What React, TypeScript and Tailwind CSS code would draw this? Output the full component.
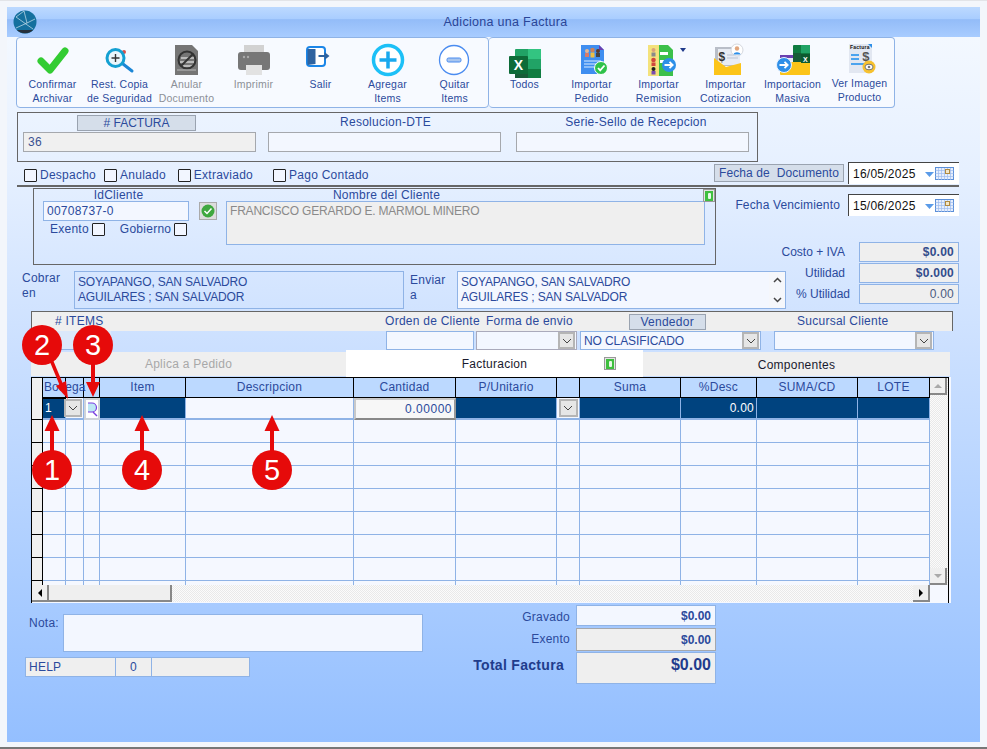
import React from 'react';

const BLUE = 'border-[#8fb3e6]';

const Check = () => (
  <svg width="36" height="32" className="overflow-visible">
    <polyline points="6,18 15,27 30,8" fill="none" stroke="#33cc33" strokeWidth="7" strokeLinecap="round" strokeLinejoin="round" />
  </svg>
);

const Restore = () => (
  <svg width="36" height="32" className="overflow-visible">
    <line x1="21" y1="21" x2="30" y2="28" stroke="#1b86d6" strokeWidth="3" strokeLinecap="round" />
    <circle cx="22" cy="9" r="2" fill="#d8504a" />
    <circle cx="13.5" cy="15" r="8.5" fill="#eaf6fb" stroke="#14a0d2" strokeWidth="3" />
    <path d="M9.500 15h8M13.500 11v8" stroke="#333" strokeWidth="1.400" />
  </svg>
);

const Anular = () => (
  <svg width="36" height="32" className="overflow-visible">
    <path d="M6 2h17l6 6v24H6z" fill="#757575" />
    <path d="M12 15h13M11 19h14M13 23h10" stroke="#cfcfcf" strokeWidth="1.400" />
    <circle cx="18" cy="17" r="8.500" fill="none" stroke="#333" strokeWidth="2" />
    <line x1="12" y1="23" x2="24" y2="11" stroke="#333" strokeWidth="2" />
    <path d="M8 27h19" stroke="#bbb" strokeWidth="1" />
  </svg>
);

const Printer = () => (
  <svg width="36" height="32" className="overflow-visible">
    <rect x="8" y="2" width="20" height="10" fill="#d2d2d2" />
    <rect x="2" y="9" width="32" height="18" rx="3" fill="#777" />
    <circle cx="8" cy="14" r="1.200" fill="#aaa" />
    <circle cx="12" cy="14" r="1.200" fill="#aaa" />
    <rect x="10" y="22" width="16" height="10" fill="#e2e2e2" />
  </svg>
);

const Salir = () => (
  <svg width="36" height="32" className="overflow-visible">
    <rect x="4" y="4" width="18" height="19" rx="3" fill="#fff" stroke="#1b86e8" strokeWidth="2" />
    <path d="M4.500 6h8v15l-8 1z" fill="#2f639f" />
    <path d="M15.500 13h7" stroke="#2f639f" strokeWidth="2" />
    <path d="M21.500 9l5 4-5 4z" fill="#2f639f" />
  </svg>
);

const Plus = () => (
  <svg width="36" height="32" className="overflow-visible">
    <circle cx="18" cy="17" r="14.500" fill="#fff" stroke="#1cc0f7" strokeWidth="3.500" />
    <path d="M9.500 17h17M18 8.500v17" stroke="#1aa9ee" strokeWidth="3.500" />
  </svg>
);

const Minus = () => (
  <svg width="36" height="32" className="overflow-visible">
    <circle cx="17" cy="17" r="14.500" fill="#fff" stroke="#4b8cf0" strokeWidth="1.300" />
    <rect x="10" y="15" width="14" height="4" rx="1.500" fill="#a9c6ee" stroke="#4b8cf0" />
  </svg>
);

const Excel = () => (
  <svg width="36" height="32" className="overflow-visible">
    <rect x="8" y="6" width="26" height="29" rx="1" fill="#21a366" />
    <rect x="21" y="6" width="13" height="10" fill="#33c481" />
    <rect x="8" y="16" width="13" height="10" fill="#107c41" />
    <rect x="21" y="26" width="13" height="9" fill="#107c41" />
    <rect x="8" y="26" width="13" height="9" fill="#185c37" />
    <rect x="2" y="13" width="19" height="18" rx="1" fill="#0d6b38" />
    <text x="11.500" y="27" textAnchor="middle" fontSize="14" fontWeight="700" fill="#fff" fontFamily="Liberation Sans">X</text>
  </svg>
);

const Pedido = () => (
  <svg width="36" height="32" className="overflow-visible">
    <path d="M7 2h18l5 5v24H7z" fill="#3f8ef0" />
    <path d="M25 2l5 5h-5z" fill="#6a3fb0" />
    <circle cx="13" cy="8" r="2" fill="#e9b58f" />
    <circle cx="18.500" cy="7" r="2.300" fill="#c9825a" />
    <circle cx="24" cy="8" r="2" fill="#5a3a2a" />
    <rect x="11" y="10" width="4" height="4" fill="#d87a6a" />
    <rect x="16.500" y="9.500" width="4" height="5" fill="#f0c040" />
    <rect x="22" y="10" width="4" height="4" fill="#444" />
    <path d="M10 18h17M10 21h17M10 24h10" stroke="#d9ebff" strokeWidth="1.200" />
    <circle cx="27" cy="25" r="6.500" fill="#2fc24a" stroke="#fff" />
    <path d="M24 25l2.200 2.400L30.500 22.500" fill="none" stroke="#fff" strokeWidth="1.800" />
  </svg>
);

const Remision = () => (
  <svg width="36" height="32" className="overflow-visible">
    <rect x="7" y="2" width="11" height="31" fill="#f4e27c" />
    <path d="M18 2h9l5 5v26H18z" fill="#3cc04a" />
    <rect x="19" y="9" width="8" height="3" fill="#fff" />
    <rect x="19" y="17" width="8" height="3" fill="#fff" />
    <circle cx="12.500" cy="7" r="2" fill="#d9a27a" />
    <rect x="10.500" y="9.500" width="4" height="4" fill="#8a8a8a" />
    <circle cx="12.500" cy="17" r="2.300" fill="#d0473c" />
    <rect x="10.500" y="19.500" width="4" height="3.500" fill="#d0473c" />
    <circle cx="12.500" cy="26" r="2" fill="#222" />
    <rect x="10.500" y="28" width="4" height="3.500" fill="#7a4bb0" />
    <circle cx="28" cy="22" r="7" fill="#2e8fe8" />
    <path d="M23.500 22h8M28.500 18.800l3.200 3.200-3.200 3.200" fill="none" stroke="#fff" strokeWidth="1.800" />
  </svg>
);

const Cotizacion = () => (
  <svg width="36" height="32" className="overflow-visible">
    <rect x="7" y="4" width="25" height="19" fill="#b9bec8" />
    <rect x="10" y="6" width="22" height="16" fill="#e8ecf4" />
    <text x="14" y="18" textAnchor="middle" fontSize="12" fontWeight="700" fill="#333" fontFamily="Liberation Sans">$</text>
    <path d="M19 12h11M19 15h11" stroke="#bbc4d4" />
    <path d="M6 15l12 9 15-4v12H6z" fill="#fcc419" />
    <circle cx="29" cy="7" r="6" fill="#fff" stroke="#d5d8de" />
    <circle cx="29" cy="5.500" r="2.200" fill="#e2a77e" />
    <path d="M25.500 11.500c.5-3 6.500-3 7 0z" fill="#2e8fe8" />
  </svg>
);

const Masiva = () => (
  <svg width="36" height="32" className="overflow-visible">
    <path d="M5 12h20v4H5z" fill="#6a3fb0" />
    <path d="M5 15h22v4H5z" fill="#e8ecf4" />
    <path d="M5 19h30v12a1 1 0 0 1-1 1H6a1 1 0 0 1-1-1z" fill="#fcc419" />
    <rect x="18" y="2" width="17" height="17" rx="1" fill="#107c41" />
    <rect x="26" y="2" width="9" height="8" fill="#21a366" />
    <rect x="18" y="10" width="8" height="9" fill="#185c37" />
    <rect x="26" y="11" width="9" height="9" fill="#0d5a30" />
    <text x="30.500" y="19" textAnchor="middle" fontSize="7" fontWeight="700" fill="#fff" fontFamily="Liberation Sans">X</text>
    <circle cx="9" cy="22" r="7.500" fill="#2e8fe8" stroke="#eaf2ff" />
    <path d="M4.500 22h8M9.500 18.800l3.200 3.200-3.200 3.200" fill="none" stroke="#fff" strokeWidth="1.800" />
  </svg>
);

const VerImagen = () => (
  <svg width="36" height="32" className="overflow-visible">
    <rect x="7" y="1" width="23" height="29" fill="#e2e7f1" />
    <path d="M26 1h4v4z" fill="#2e8fe8" />
    <text x="8" y="6" fontSize="5" fontWeight="700" fill="#111" fontFamily="Liberation Sans">Factura</text>
    <text x="24" y="18" textAnchor="middle" fontSize="13" fontWeight="700" fill="#555" fontFamily="Liberation Sans">$</text>
    <path d="M9 12h8M9 16h8M9 21h17" stroke="#4ba3ee" strokeWidth="1.800" />
    <circle cx="27" cy="24" r="6.500" fill="#f6c12f" />
    <ellipse cx="27" cy="24" rx="4" ry="2.800" fill="#fff" stroke="#777" />
    <circle cx="27" cy="24" r="1.300" fill="#777" />
  </svg>
);

const TOOLS_A = [
  { icon: <Check />, lines: ['Confirmar', 'Archivar'] },
  { icon: <Restore />, lines: ['Rest. Copia', 'de Seguridad'] },
  { icon: <Anular />, lines: ['Anular', 'Documento'], off: true },
  { icon: <Printer />, lines: ['Imprimir'], off: true },
  { icon: <Salir />, lines: ['Salir'] },
  { icon: <Plus />, lines: ['Agregar', 'Items'] },
  { icon: <Minus />, lines: ['Quitar', 'Items'] },
];

const TOOLS_B = [
  { icon: <Excel />, lines: ['Todos'] },
  { icon: <Pedido />, lines: ['Importar', 'Pedido'] },
  { icon: <Remision />, lines: ['Importar', 'Remision'] },
  { icon: <Cotizacion />, lines: ['Importar', 'Cotizacion'] },
  { icon: <Masiva />, lines: ['Importacion', 'Masiva'] },
  { icon: <VerImagen />, lines: ['Ver Imagen', 'Producto'], up: true },
];

type Tool = { icon: React.ReactNode; lines: string[]; off?: boolean; up?: boolean };

const ToolItem = ({ tool }: { tool: Tool }) => (
  <div className="w-[67px] flex flex-col items-center pt-[5px]">
    <div className="h-[32px]">{tool.icon}</div>
    <div className={`${tool.up ? 'mt-[1px]' : 'mt-[2px]'} text-[10.500px] tracking-[0.2px] leading-[14px] text-center whitespace-nowrap ${tool.off ? 'text-[#8c9097]' : 'text-[#2b4a9c]'}`}>
      {tool.lines.map((l) => (
        <div key={l}>{l}</div>
      ))}
    </div>
  </div>
);

const Box = ({ className }: { className?: string }) => (
  <div className={`w-[13px] h-[13px] border border-[#222] bg-[#f2f6ff] rounded-[1px] shrink-0 ${className ?? ''}`} />
);

const Chevron = ({ className }: { className?: string }) => (
  <div className={`bg-[#e6e6e6] border-2 border-[#b5b5b5] flex items-center justify-center shrink-0 ${className ?? ''}`}>
    <svg width="10" height="6" viewBox="0 0 10 6">
      <path d="M1 1l4 4 4-4" fill="none" stroke="#444" strokeWidth="1" />
    </svg>
  </div>
);

const DateBox = ({ value }: { value: string }) => (
  <div className="w-[111px] h-[22px] bg-white border-t border-l border-[#444] flex items-center pl-[4px] shrink-0">
    <span className="text-[12px] text-[#111] mt-[1px]">{value}</span>
    <svg width="30" height="14" className="ml-auto mr-[5px]">
      <path d="M1 5h9l-4.500 5z" fill="#5b9be8" />
      <rect x="11.500" y="0.500" width="18" height="12" fill="#e6eefc" stroke="#5b8fd8" />
      <path d="M11.500 3.500h18M11.500 6.500h18M11.500 9.500h18M14.500 1v12M17.500 1v12M20.500 1v12M23.500 1v12M26.500 1v12" stroke="#9dbbee" strokeWidth="0.700" />
      <rect x="21.500" y="2.500" width="4" height="4" fill="#f3e6c8" stroke="#b08a3e" />
    </svg>
  </div>
);

const GreenTab = ({ className }: { className?: string }) => (
  <div className={`w-[12px] h-[13px] bg-[#e4e4e4] border border-[#999] flex items-center justify-center ${className ?? ''}`}>
    <div className="w-[8px] h-[10px] bg-[#3fbf3f] flex items-center justify-center">
      <div className="w-[3px] h-[6px] bg-[#e8f8e8] rounded-[1px]" />
    </div>
  </div>
);

const CostRow = ({ label, value, bold, mr }: { label: string; value: string; bold?: boolean; mr: string }) => (
  <div className="flex justify-end items-center h-[20px] mb-[1px]">
    <span className={`whitespace-nowrap ${mr} -mt-[1px] tracking-normal`}>{label}</span>
    <div className={`w-[100px] h-[20px] border ${BLUE} bg-[#efefef] text-right pr-[4px] leading-[19px] shrink-0 ${bold ? 'font-bold text-[#334d8c]' : 'text-[#4a5a80]'}`}>
      {value}
    </div>
  </div>
);

const COLS = 'grid grid-cols-[11px_23px_18px_16px_86px_168px_102px_101px_23px_101px_76px_101px_72px]';
const RH = 'bg-[#f0f0f0] border-r border-b border-black';
const HEADS = ['Item', 'Descripcion', 'Cantidad', 'P/Unitario', '', 'Suma', '%Desc', 'SUMA/CD', 'LOTE'];
const NAVY = 'bg-[#00437f] border-r border-b-2 border-[#8fb3e6]';

const EmptyRow = ({ h }: { h: string }) => (
  <div className={COLS}>
    <div className={`${RH} ${h}`} />
    {Array.from({ length: 12 }).map((_, i) => (
      <div key={i} className={`border-r border-b ${BLUE} ${h}`} />
    ))}
  </div>
);

const ScrollBtn = ({ className, children }: { className?: string; children: React.ReactNode }) => (
  <div className={`bg-[#efefef] border-r-2 border-b-2 border-[#888] flex items-center justify-center shrink-0 ${className ?? ''}`}>{children}</div>
);

const Track = '[background:repeating-conic-gradient(#e9e9e9_0_25%,#fbfbfb_0_50%)_0_0/2px_2px]';

const Callout = ({ n, x, y }: { n: number; x: string; y: string }) => (
  <div className={`absolute ${x} ${y} w-[40px] h-[40px] rounded-full bg-[#e60a0a] text-white text-[29px] tracking-normal leading-[40px] text-center`}>{n}</div>
);

export default function App() {
  return (
    <div className="relative w-[987px] h-[749px] bg-[#f3f6fb] border-t border-b-2 border-t-[#e2e4e8] border-b-[#777] pt-[6px] px-[7px] overflow-hidden [font-family:'Liberation_Sans',Arial,sans-serif] text-[12px] tracking-[0.25px] text-[#2b4a9c]">
      <div className="w-[973px] h-[735px] flex flex-col bg-[linear-gradient(180deg,#f6faff_0%,#e6f0ff_22%,#cfe2ff_43%,#a6caff_82%,#94bfff_100%)]">
        {/* Title bar */}
        <div className="relative h-[30px] shrink-0 flex items-center justify-center pl-[24px] bg-[linear-gradient(180deg,#bcd9ff_0%,#a9cdff_40%,#93bcf8_42%,#a8ccff_100%)]">
          <svg width="24" height="24" viewBox="0 0 24 24" className="absolute left-[6px] top-[3px]">
            <circle cx="12" cy="12" r="11.500" fill="#15709e" />
            <path d="M4 20a11.500 11.500 0 0 0 16 0z" fill="#26303c" />
            <path d="M3 7l17 12M3 7l8-6M11 1l3 12M14 13L3 18M14 13l8-4" fill="none" stroke="#cfe4ee" strokeWidth="0.700" />
          </svg>
          <span className="text-[12.500px] tracking-[0.3px] text-[#2a4597]">Adiciona una Factura</span>
        </div>

        {/* Toolbar */}
        <div className="flex ml-[9px] h-[71px] shrink-0">
          <div className={`relative flex w-[473px] pl-[2px] bg-[#f7faff] border ${BLUE} rounded-[4px]`}>
            {TOOLS_A.map((t) => (
              <ToolItem key={t.lines[0]} tool={t} />
            ))}
          </div>
          <div className={`relative flex w-[406px] pl-[2px] bg-[#f7faff] border border-l-0 ${BLUE} rounded-[4px]`}>
            {TOOLS_B.map((t) => (
              <ToolItem key={t.lines.join()} tool={t} />
            ))}
            <div className="absolute left-[191px] top-[10px] w-0 h-0 border-x-[3px] border-x-transparent border-t-[4px] border-t-[#1f3a8a]" />
          </div>
        </div>

        {/* Numero de factura */}
        <div className="ml-[10px] mt-[4px] w-[741px] h-[50px] border border-[#666] shrink-0 pl-[5px] pt-[2px]">
          <div className="flex h-[16px] leading-[15px]">
            <div className="ml-[54px] w-[119px] bg-[#d5deea] border border-[#9aa3b0] text-center tracking-normal">
              # FACTURA
            </div>
            <div className="ml-[72px] w-[233px] text-center leading-[14px] pl-[2px]">Resolucion-DTE</div>
            <div className="ml-[15px] w-[233px] text-center leading-[14px] pl-[7px]">Serie-Sello de Recepcion</div>
          </div>
          <div className="flex mt-[1px] h-[20px]">
            <div className="w-[233px] bg-[#f0f0f0] border border-[#a5a8ad] pl-[4px] leading-[19px] text-[#3a5290]">36</div>
            <div className="ml-[12px] w-[233px] bg-[#f3f7ff] border border-[#a5a8ad]" />
            <div className="ml-[15px] w-[233px] bg-[#f3f7ff] border border-[#a5a8ad]" />
          </div>
        </div>

        {/* Opciones y fecha */}
        <div className="flex ml-[17px] w-[935px] h-[23px] shrink-0">
          <div className="flex items-center h-[14px] mt-[6px]">
            <Box />
            <span className="ml-[3px]">Despacho</span>
            <Box className="ml-[8px]" />
            <span className="ml-[3px]">Anulado</span>
            <Box className="ml-[12px]" />
            <span className="ml-[3px]">Extraviado</span>
            <Box className="ml-[20px]" />
            <span className="ml-[3px]">Pago Contado</span>
          </div>
          <div className="ml-auto mt-[2px] w-[130px] h-[18px] bg-[#d5deea] border border-[#9aa3b0] text-center leading-[16px] whitespace-nowrap tracking-[0.1px]">
            Fecha de&nbsp; Documento
          </div>
          <div className="ml-[4px]">
            <DateBox value="16/05/2025" />
          </div>
        </div>
        <div className="ml-[10px] w-[942px] h-[2px] bg-[#666] shrink-0" />

        {/* Cliente y direcciones */}
        <div className="flex mt-[1px] h-[123px] shrink-0">
          <div className="w-[783px] shrink-0">
            <div className="relative ml-[26px] w-[683px] h-[77px] border border-[#666] flex pl-[9px]">
              <div className="w-[146px] shrink-0">
                <div className="text-center h-[12px] leading-[13px] pl-[5px]">IdCliente</div>
                <div className={`h-[20px] border ${BLUE} bg-[#f3f7ff] pl-[3px] leading-[19px]`}>00708737-0</div>
                <div className="flex items-center mt-[1px] leading-[14px]">
                  <span className="ml-[7px]">Exento</span>
                  <Box className="ml-[3px]" />
                  <span className="ml-[15px]">Gobierno</span>
                  <Box className="ml-[3px]" />
                </div>
              </div>
              <div className="ml-[10px] mt-[13px] w-[18px] h-[18px] bg-[#ddd] border border-[#aaa] flex items-center justify-center shrink-0">
                <svg width="14" height="14" viewBox="0 0 14 14">
                  <circle cx="7" cy="7" r="6.500" fill="#3fa83f" />
                  <path d="M3.500 7l2.500 2.500 4.500-5" fill="none" stroke="#fff" strokeWidth="1.500" />
                </svg>
              </div>
              <div className="ml-[9px] w-[479px] shrink-0">
                <div className="text-center h-[12px] leading-[13px] pr-[158px]">Nombre del Cliente</div>
                <div className={`h-[44px] border ${BLUE} bg-[#efefef] pl-[3px] leading-[19px] text-[#8a8a8a] tracking-[-0.2px]`}>
                  FRANCISCO GERARDO E. MARMOL MINERO
                </div>
              </div>
              <GreenTab className="absolute right-0 top-0" />
            </div>
            <div className="flex mt-[6px] ml-[15px] h-[38px]">
              <div className="w-[52px] leading-[15px]">
                Cobrar
                <br />
                en
              </div>
              <div className={`w-[330px] border ${BLUE} pl-[3px] pt-[3px] leading-[15px] whitespace-nowrap tracking-[-0.17px]`}>
                SOYAPANGO, SAN SALVADRO
                <br />
                AGUILARES ; SAN SALVADOR
              </div>
              <div className="ml-[6px] w-[47px] leading-[15px] pt-[2px]">
                Enviar
                <br />a
              </div>
              <div className={`relative w-[329px] border ${BLUE} bg-[#f3f7ff] pl-[3px] pt-[3px] leading-[15px] whitespace-nowrap tracking-[-0.17px]`}>
                SOYAPANGO, SAN SALVADRO
                <br />
                AGUILARES ; SAN SALVADOR
                <div className="absolute right-0 top-0 bottom-0 w-[16px] bg-[#f5f7fb] flex flex-col justify-between items-center py-[5px]">
                  <svg width="9" height="6" viewBox="0 0 9 6"><path d="M1 5l3.500-3.500L8 5" fill="none" stroke="#444" strokeWidth="1.500" /></svg>
                  <svg width="9" height="6" viewBox="0 0 9 6"><path d="M1 1l3.500 3.500L8 1" fill="none" stroke="#444" strokeWidth="1.500" /></svg>
                </div>
              </div>
            </div>
          </div>
          <div className="w-[169px] shrink-0">
            <div className="flex justify-end items-center h-[22px] mt-[6px]">
              <span className="whitespace-nowrap mr-[8px] -mt-[1px] tracking-[0.15px]">Fecha Vencimiento</span>
              <DateBox value="15/06/2025" />
            </div>
            <div className="mt-[26px]">
              <CostRow label="Costo + IVA" value="$0.00" bold mr="mr-[14px]" />
              <CostRow label="Utilidad" value="$0.000" bold mr="mr-[14px]" />
              <CostRow label="% Utilidad" value="0.00" mr="mr-[9px]" />
            </div>
          </div>
        </div>

        {/* Encabezado de detalle */}
        <div className="ml-[24px] w-[922px] h-[20px] bg-[#efefef] border-t border-r border-l border-[#666] flex leading-[19px] shrink-0">
          <div className="w-[354px] pl-[23px]"># ITEMS</div>
          <div className="w-[90px] text-center whitespace-nowrap">Orden de Cliente</div>
          <div className="w-[104px] text-center whitespace-nowrap pl-[5px]">Forma de envio</div>
          <div className="ml-[50px] w-[77px] h-[16px] mt-[2px] bg-[#d5deea] border border-[#9aa3b0] text-center leading-[14px]">Vendedor</div>
          <div className="w-[247px] text-center pl-[28px]">Sucursal Cliente</div>
        </div>
        <div className="ml-[24px] h-[19px] flex shrink-0">
          <div className={`w-[80px] border-l border-b ${BLUE} bg-[#dbe8fb]`} />
          <div className={`ml-[275px] w-[88px] border ${BLUE} bg-[#f3f7ff]`} />
          <div className="ml-[2px] w-[101px] border border-[#aab] bg-[#f3f7ff] flex justify-end items-center pr-[1px]">
            <Chevron className="w-[17px] h-[17px]" />
          </div>
          <div className={`ml-[3px] w-[181px] border ${BLUE} bg-[#f3f7ff] flex items-center pl-[3px] tracking-[-0.1px]`}>
            <span>NO CLASIFICADO</span>
            <Chevron className="w-[17px] h-[17px] ml-auto mr-[1px]" />
          </div>
          <div className={`ml-[13px] w-[160px] border ${BLUE} bg-[#f3f7ff] flex justify-end items-center pr-[1px]`}>
            <Chevron className="w-[17px] h-[17px]" />
          </div>
        </div>

        {/* Pestanas */}
        <div className="ml-[24px] h-[27px] flex shrink-0 text-[12px]">
          <div className="w-[315px] mt-[2px] mb-[1px] bg-[#efefef] text-[#a8a8a8] flex items-center justify-center">Aplica a Pedido</div>
          <div className="relative w-[297px] bg-white text-[#1a1a2e] flex items-center justify-center">
            Facturacion
            <GreenTab className="absolute right-[27px] top-[7px]" />
          </div>
          <div className="w-[307px] mt-[2px] mb-[1px] pt-[1px] bg-[#efefef] text-[#1a1a2e] flex items-center justify-center">Componentes</div>
        </div>

        {/* Grilla */}
        <div className="ml-[24px] w-[920px] h-[226px] bg-[#f5f8ff] shrink-0">
          <div className="w-[918px] h-full border-l border-r border-t border-black">
            <div className="flex h-[207px]">
              <div className="w-[898px] overflow-hidden">
                <div className={`${COLS} h-[20px]`}>
                  <div className={RH} />
                  <div className="relative col-span-2 bg-[#bcd9ff] border-r border-b-2 border-black pl-[1px] leading-[19px] whitespace-nowrap tracking-normal">
                    Bodega
                    <div className="absolute left-[22px] top-0 bottom-0 w-px bg-black" />
                  </div>
                  <div className="bg-[#bcd9ff] border-r border-b-2 border-black" />
                  {HEADS.map((h, i) => (
                    <div key={i} className="bg-[#bcd9ff] border-r border-b-2 border-black text-center leading-[19px]">
                      {h}
                    </div>
                  ))}
                </div>
                <div className={COLS}>
                  <div className={`${RH} h-[22px]`} />
                  <div className={`${NAVY} text-white pl-[2px] leading-[20px]`}>1</div>
                  <div className={`border-r border-b-2 ${BLUE} bg-[#f5f8ff] relative`}>
                    <Chevron className="absolute -left-[2px] top-[1px] w-[18px] h-[18px]" />
                  </div>
                  <div className="bg-white border-2 border-[#cfd3da] flex items-center justify-center">
                    <svg width="12" height="16" viewBox="0 0 12 16">
                      <path d="M2 2h4a4.500 4.500 0 0 1 0 9H2" fill="#bde7f5" stroke="#7a3fe0" strokeWidth="1.200" />
                      <path d="M7 11l4 4" stroke="#7a3fe0" strokeWidth="1.500" />
                    </svg>
                  </div>
                  <div className={NAVY} />
                  <div className={`border-r border-b-2 ${BLUE} bg-[#f5f8ff]`} />
                  <div className="border-2 border-[#c9c9c9] border-b-[#888] border-r-[#999] bg-[#f7f7f7] text-right pr-[2px] leading-[18px] tracking-[0.5px]">0.00000</div>
                  <div className={NAVY} />
                  <div className={`border-r border-b-2 ${BLUE} bg-[#f5f8ff] flex items-start justify-center pt-[1px]`}>
                    <Chevron className="w-[19px] h-[18px]" />
                  </div>
                  <div className={NAVY} />
                  <div className={`${NAVY} text-white text-right pr-[2px] leading-[20px]`}>0.00</div>
                  <div className={NAVY} />
                  <div className={NAVY} />
                </div>
                {[0, 1, 2, 3, 4, 5, 6, 7].map((i) => (
                  <EmptyRow key={i} h="h-[23px]" />
                ))}
              </div>
              <div className={`w-[18px] flex flex-col justify-between ${Track}`}>
                <ScrollBtn className="h-[17px] w-[17px]">
                  <div className="w-0 h-0 border-x-[4px] border-x-transparent border-b-[4px] border-b-[#aaa]" />
                </ScrollBtn>
                <ScrollBtn className="h-[17px] w-[17px]">
                  <div className="w-0 h-0 border-x-[4px] border-x-transparent border-t-[4px] border-t-[#aaa]" />
                </ScrollBtn>
              </div>
            </div>
            <div className={`flex h-[17px] w-[898px] ${Track}`}>
              <ScrollBtn className="w-[17px] h-[17px]">
                <div className="w-0 h-0 border-y-[4px] border-y-transparent border-r-[4px] border-r-black" />
              </ScrollBtn>
              <div className="w-[123px] h-[17px] bg-[#efefef] border-r-2 border-b-2 border-[#888]" />
              <ScrollBtn className="w-[17px] h-[17px] ml-auto">
                <div className="w-0 h-0 border-y-[4px] border-y-transparent border-l-[4px] border-l-black" />
              </ScrollBtn>
            </div>
          </div>
        </div>

        {/* Nota y totales */}
        <div className="flex shrink-0">
          <div className="ml-[18px] w-[405px] pt-[11px]">
            <div className="flex">
              <span className="ml-[4px] w-[34px]">Nota:</span>
              <div className={`w-[360px] h-[38px] border ${BLUE} bg-[#f3f7ff]`} />
            </div>
            <div className="flex mt-[5px] h-[20px] leading-[19px]">
              <div className={`w-[91px] border ${BLUE} bg-[#efefef] pl-[3px]`}>HELP</div>
              <div className={`w-[36px] border border-l-0 ${BLUE} bg-[#efefef] text-center`}>0</div>
              <div className={`w-[98px] border border-l-0 ${BLUE} bg-[#efefef]`} />
            </div>
          </div>
          <div className="w-[286px] pt-[2px]">
            <div className="flex justify-end items-center h-[21px]">
              <span className="mr-[6px] mt-[2px]">Gravado</span>
              <div className={`w-[140px] h-[21px] border ${BLUE} bg-[#f3f7ff] text-right pr-[4px] leading-[20px] font-bold tracking-normal`}>$0.00</div>
            </div>
            <div className="flex justify-end items-center h-[23px] mt-[2px]">
              <span className="mr-[6px] -mt-[1px]">Exento</span>
              <div className="w-[140px] h-[23px] border border-[#a5a8ad] bg-[#efefef] text-right pr-[4px] leading-[22px] font-bold tracking-normal">$0.00</div>
            </div>
            <div className="flex justify-end mt-[1px]">
              <span className="mr-[12px] mt-[3px] text-[14px] tracking-[0.3px] font-bold text-[#1f3c8c]">Total Factura</span>
              <div className={`w-[140px] h-[32px] border ${BLUE} bg-[#efefef] text-right pr-[4px] text-[16px] font-bold leading-[23px] text-[#1f3c8c] tracking-normal`}>$0.00</div>
            </div>
          </div>
        </div>
      </div>

      {/* Marcas numeradas sobre la captura */}
      <svg width="987" height="749" className="absolute left-0 top-[-1px] pointer-events-none">
        <g fill="#e60a0a" stroke="none">
          <rect x="50" y="428" width="4" height="24" />
          <path d="M44.500 431L52 415l7.500 16z" />
          <rect x="140" y="428" width="4" height="24" />
          <path d="M134.500 431L142 415l7.500 16z" />
          <rect x="270" y="428" width="4" height="24" />
          <path d="M264.500 431L272 415l7.500 16z" />
          <rect x="91" y="362" width="4" height="24" />
          <path d="M86 382h14l-7 15z" />
          <path d="M50 362l3-2 10 24-3 2z" />
          <path d="M68 399l-12-13 10-5z" />
        </g>
      </svg>
      <Callout n={1} x="left-[32px]" y="top-[449px]" />
      <Callout n={2} x="left-[22px]" y="top-[324px]" />
      <Callout n={3} x="left-[73px]" y="top-[324px]" />
      <Callout n={4} x="left-[122px]" y="top-[449px]" />
      <Callout n={5} x="left-[252px]" y="top-[449px]" />
    </div>
  );
}
